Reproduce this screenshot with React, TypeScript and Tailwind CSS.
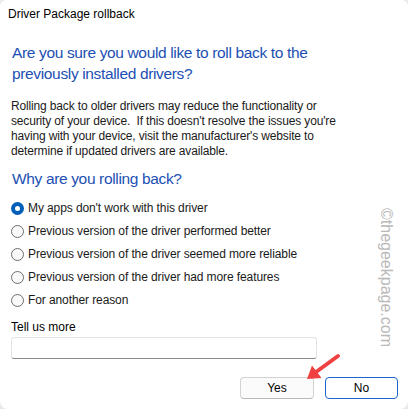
import React from 'react'

const REASONS = [
  "My apps don't work with this driver",
  'Previous version of the driver performed better',
  'Previous version of the driver seemed more reliable',
  'Previous version of the driver had more features',
  'For another reason',
]

function Radio({ checked }: { checked: boolean }) {
  if (checked) {
    return (
      <span className="flex h-[13px] w-[13px] shrink-0 items-center justify-center rounded-full bg-[#005fb8]">
        <span className="h-[5px] w-[5px] rounded-full bg-white" />
      </span>
    )
  }
  return <span className="h-[13px] w-[13px] shrink-0 rounded-full border border-[#6e6e6e] bg-[#f9f9f9]" />
}

export default function App() {
  return (
    <div className="relative h-[409px] w-[408px] overflow-hidden bg-[#e9e9e9] font-['Liberation_Sans',sans-serif] text-black">
      <div className="flex h-full flex-col rounded-b-[8px] rounded-t-[6px] bg-white">
        <div className="px-[8px] pt-[6px] text-[12px] leading-[16px]">Driver Package rollback</div>

        <div className="px-[12px] pt-[20px] text-[15.5px] leading-[21px] tracking-[-0.35px] text-[#1c4fb3]">
          Are you sure you would like to roll back to the
          <br />
          previously installed drivers?
        </div>

        <p className="whitespace-nowrap px-[11px] pt-[15px] text-[12px] leading-[15px] tracking-[-0.15px] text-[#1a1a1a]">
          Rolling back to older drivers may reduce the functionality or
          <br />
          security of your device.&nbsp; If this doesn't resolve the issues you're
          <br />
          having with your device, visit the manufacturer's website to
          <br />
          determine if updated drivers are available.
        </p>

        <div className="px-[12px] pt-[9px] text-[15.5px] leading-[22px] tracking-[-0.35px] text-[#1c4fb3]">
          Why are you rolling back?
        </div>

        <div className="flex flex-col gap-[7px] px-[11px] pt-[10px]">
          {REASONS.map((r, i) => (
            <label key={i} className="flex h-[16px] items-center gap-[4px] text-[12px] tracking-[-0.1px] text-[#1a1a1a]">
              <Radio checked={i === 0} />
              {r}
            </label>
          ))}
        </div>

        <div className="px-[11px] pt-[11px] text-[12px] leading-[16px]">Tell us more</div>
        <div className="mx-[11px] mt-[2px] h-[22px] w-[306px] rounded-[3px] border border-[#e3e3e3] border-b-[#8a8a8a] bg-white" />

        <div className="flex justify-end gap-[11px] pr-[10px] pt-[18px]">
          <button className="h-[22px] w-[74px] rounded-[4px] border border-[#d2d2d2] border-b-[#b8b8b8] bg-[#fbfbfb] text-[12px]">
            Yes
          </button>
          <button className="h-[22px] w-[73px] rounded-[4px] border-[1.5px] border-[#1d66c9] bg-white text-[12px]">
            No
          </button>
        </div>
      </div>

      {/* watermark */}
      <div className="absolute left-[377px] top-[208px] origin-top-left translate-x-[19px] rotate-90 whitespace-nowrap text-[16px] leading-[19px] text-[#b9b9b9]">
        ©thegeekpage.com
      </div>

      {/* arrow */}
      <svg className="absolute left-[295px] top-[345px]" width="55" height="40" viewBox="0 0 55 40">
        <line x1="43" y1="11" x2="21" y2="27" stroke="#ef4141" strokeWidth="4" strokeLinecap="round" />
        <polygon points="12,34 17,20.5 26.5,33" fill="#ef4141" />
      </svg>
    </div>
  )
}
